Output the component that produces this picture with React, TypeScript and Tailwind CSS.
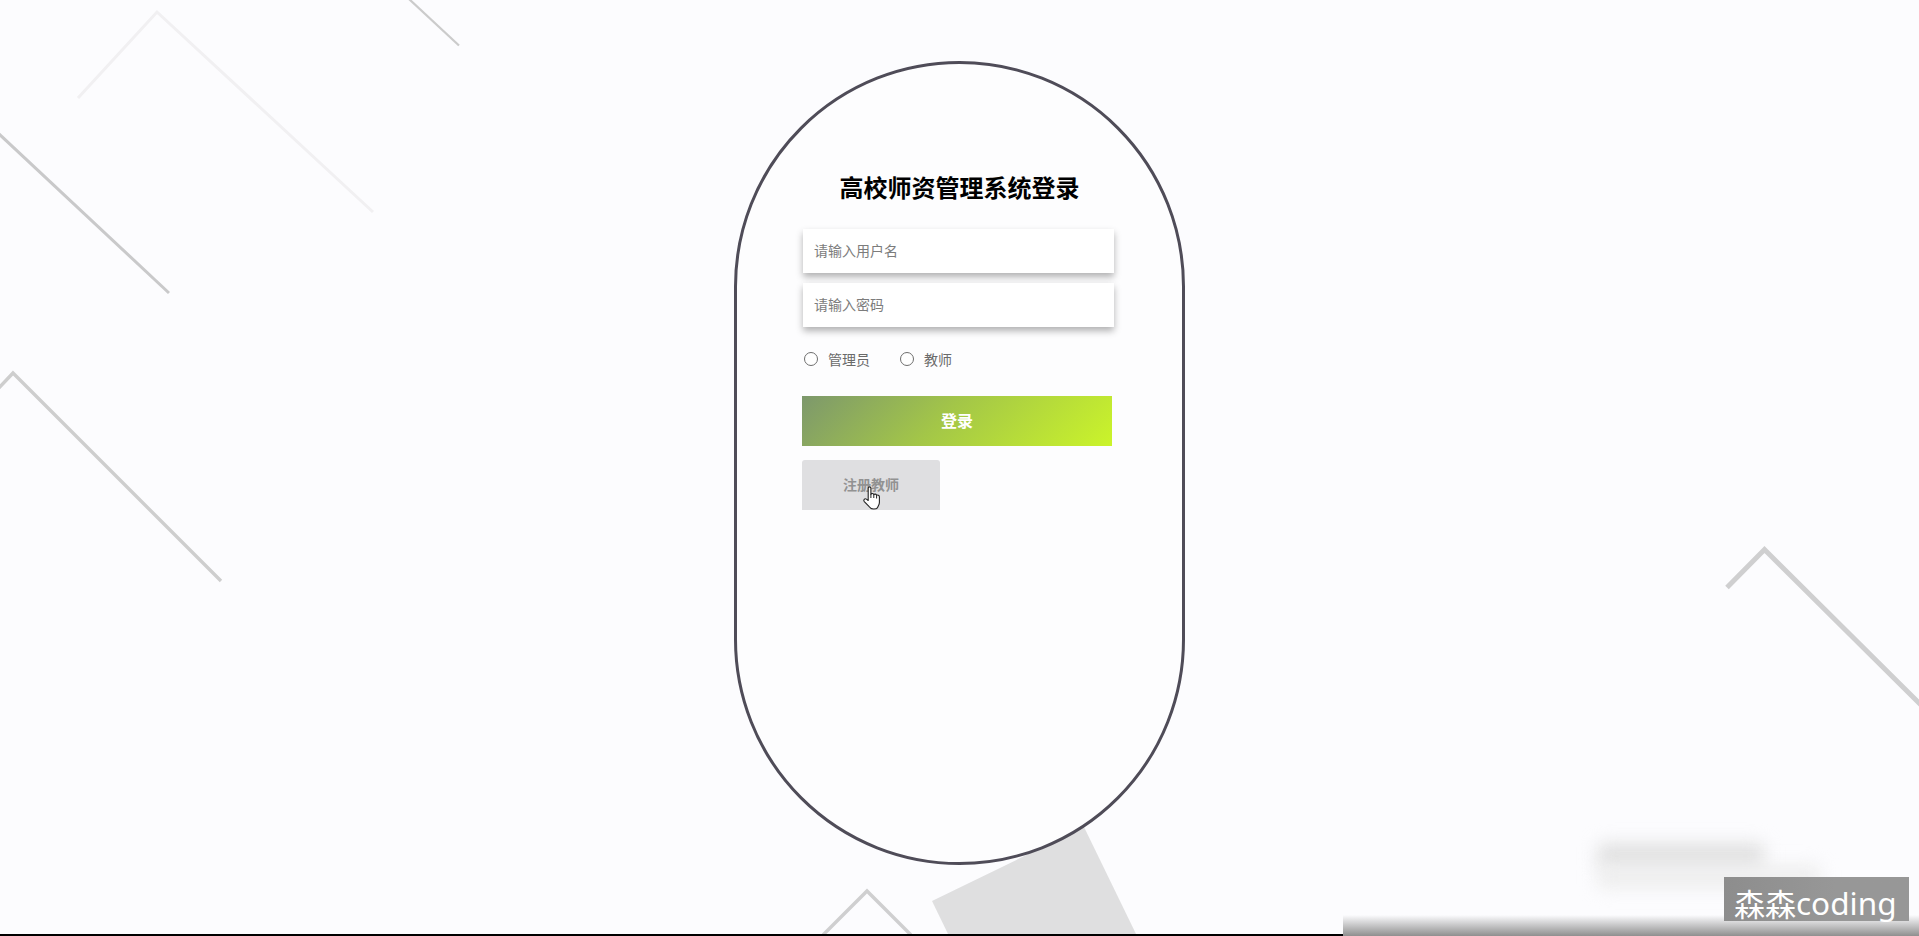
import React from "react";

function Backdrop() {
  return (
    <svg className="absolute inset-0 h-full w-full" viewBox="0 0 1919 936" fill="none">
      <path d="M78 98L157 12L373 212" stroke="#f1f0f2" strokeWidth="3" />
      <path d="M409 -1L459 45.500" stroke="#cbcbcb" strokeWidth="2.200" />
      <path d="M-2 133L169 293" stroke="#c9c9ca" strokeWidth="3" />
      <path d="M-4 391L13 373L221 581" stroke="#cecece" strokeWidth="3.400" />
      <path d="M1727 587.500L1764.500 549.500L1922 706" stroke="#cfcfd0" strokeWidth="5" />
      <path d="M823 935L867 891L911 935" stroke="#cfcfd0" strokeWidth="3.400" />
      <path d="M932 901L1084 827L1137 936H949Z" fill="#dfdfe0" />
    </svg>
  );
}

function Cursor() {
  return (
    <svg className="absolute left-[60px] top-[26px] h-[24px] w-[19px]" viewBox="0 0 19 24">
      <path
        d="M6.200 14.500V2.200C6.200 .4 8.900 .4 8.900 2.200V8.200C9.300 7.100 11.600 7.200 11.800 8.600C12.500 7.700 14.400 8 14.600 9.400C15.600 8.600 17.400 9.200 17.400 10.800V16.500C17.400 18.500 16.500 19.600 15.800 21.100C15.300 22.500 13.600 23 11.800 23C9.400 23 8.300 22.300 7.200 20.700L2.300 15.600C.9 13.900 2.700 12.100 4.400 13.100Z"
        fill="#fff"
        stroke="#222"
        strokeWidth="1.100"
        strokeLinejoin="round"
      />
      <path d="M8.900 8V12M11.800 8.600V12M14.600 9.400V12.500" stroke="#222" strokeWidth="1" fill="none" />
    </svg>
  );
}

function Field({ placeholder, type }: { placeholder: string; type: string }) {
  return (
    <input
      type={type}
      placeholder={placeholder}
      className="block h-[44px] w-[311px] bg-white px-[11px] pb-[2px] text-[14px] shadow-[0_4px_7px_rgba(0,0,0,0.3)] outline-none placeholder:text-[#7c7c7c]"
    />
  );
}

function Role({ label }: { label: string }) {
  return (
    <label className="flex items-center gap-[10px] text-[14px] leading-5 text-[#6a6a6a]">
      <input
        type="radio"
        name="role"
        className="size-[14px] appearance-none rounded-full border border-[#6e6e6e] bg-white"
      />
      {label}
    </label>
  );
}

export default function App() {
  return (
    <main className="relative h-[936px] w-full overflow-hidden bg-[#fcfcfe] font-['Noto_Sans_CJK_SC',sans-serif]">
      <Backdrop />

      <section className="relative ml-[734px] mt-[61px] flex h-[804px] w-[451px] flex-col rounded-[226px] border-[3px] border-[#4f4c58] bg-[#fdfdfe] pl-[65px]">
        <h1 className="mt-[105px] w-[315px] text-center text-[24px] font-bold leading-[36px] text-black">
          高校师资管理系统登录
        </h1>
        <form className="mt-[24px] flex flex-col">
          <div className="ml-[1px] flex flex-col gap-[10px]">
            <Field type="text" placeholder="请输入用户名" />
            <Field type="password" placeholder="请输入密码" />
          </div>
          <div className="ml-[2px] mt-[22px] flex gap-[30px]">
            <Role label="管理员" />
            <Role label="教师" />
          </div>
          <button
            type="button"
            className="mt-[27px] h-[50px] w-[310px] bg-[linear-gradient(135deg,#7d986c_0%,#a3c648_45%,#cbf42a_100%)] pb-[3px] text-[16px] font-bold text-white"
          >
            登录
          </button>
          <button
            type="button"
            className="relative mt-[14px] h-[50px] w-[138px] rounded-t-[3px] bg-[#dfdfe1] pb-[1px] text-[14px] font-bold text-[#929292]"
          >
            注册教师
            <Cursor />
          </button>
        </form>
      </section>

      <div className="absolute left-[1598px] top-[844px] h-[24px] w-[166px] rounded bg-[#dfdfdf] blur-[9px]" />
      <div className="absolute left-[1598px] top-[866px] h-[22px] w-[222px] rounded bg-[#ededed] blur-[9px]" />
      <div className="absolute bottom-0 left-0 h-[2px] w-[1343px] bg-black" />
      <div className="absolute bottom-0 left-[1343px] right-0 h-[21px] bg-gradient-to-b from-transparent to-[#8f8f8f]" />
      <div className="absolute left-[1724px] top-[877px] flex h-[44px] w-[185px] items-center whitespace-nowrap bg-gradient-to-r from-[#8d8d8d] to-[#979797] to-60% pl-[10px] text-white">
        <span className="mt-[7px] text-[31px] leading-[44px]">森森</span>
        <span className="mt-[7px] font-['Noto_Sans','Open_Sans',sans-serif] text-[31.500px] leading-[44px]">coding</span>
      </div>
    </main>
  );
}
